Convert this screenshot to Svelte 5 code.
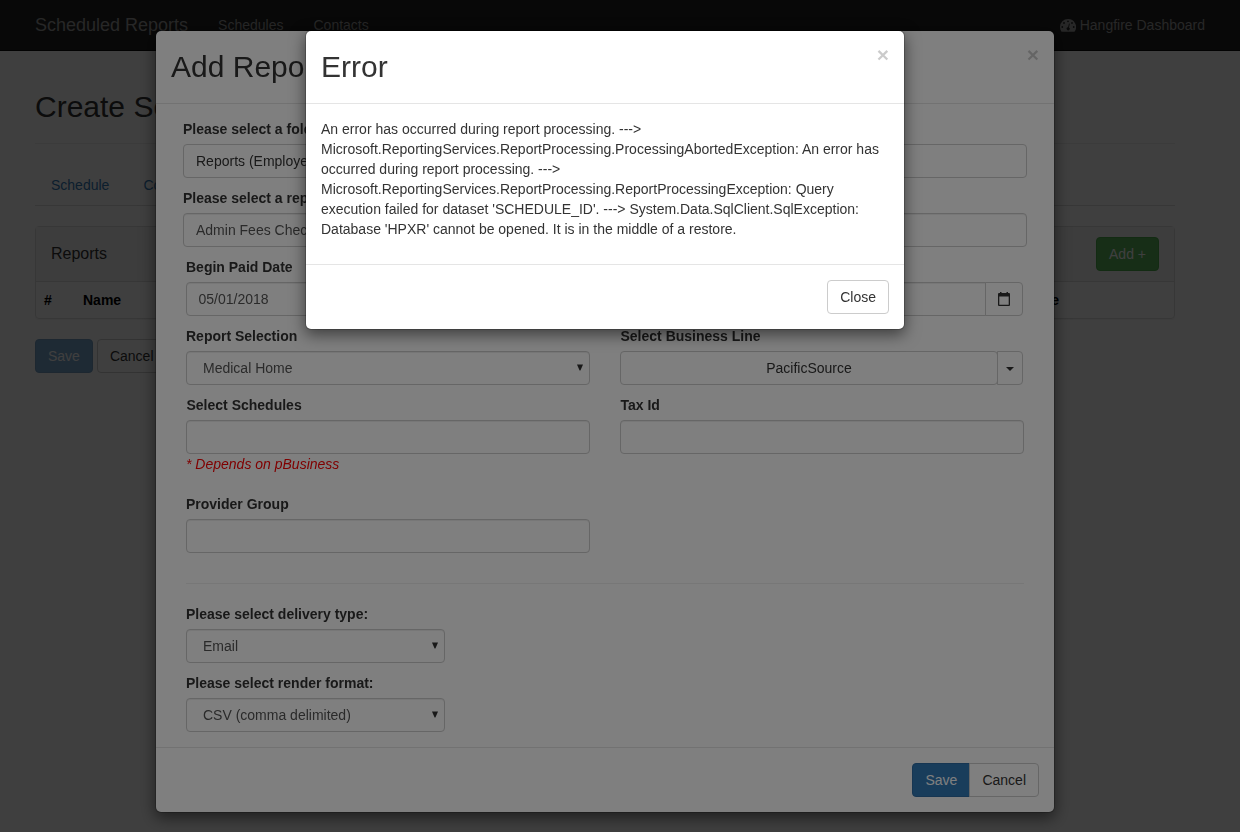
<script>
  const message = [
    'An error has occurred during report processing. --->',
    'Microsoft.ReportingServices.ReportProcessing.ProcessingAbortedException: An error has',
    'occurred during report processing. --->',
    'Microsoft.ReportingServices.ReportProcessing.ReportProcessingException: Query',
    "execution failed for dataset 'SCHEDULE_ID'. ---> System.Data.SqlClient.SqlException:",
    "Database 'HPXR' cannot be opened. It is in the middle of a restore."
  ];
</script>

{#snippet select(value)}
  <div class="control select">
    <span>{value}</span>
    <svg width="6" height="7" viewBox="0 0 6 7"><path d="M0 .5h6L3.400 6.500h-.8z" fill="#333" /></svg>
  </div>
{/snippet}

<div class="page">
  <nav class="navbar">
    <span class="brand">Scheduled Reports</span>
    <span class="navlink">Schedules</span>
    <span class="navlink">Contacts</span>
    <span class="navlink right">
      <svg width="16" height="13" viewBox="0 0 16 13">
        <path fill="#9d9d9d" fill-rule="evenodd" d="M8 0a8 8 0 0 0-8 8c0 1.600.4 3 1.200 4.300.2.400.4.500.8.500h12c.4 0 .6-.1.800-.5A8 8 0 0 0 8 0zM2.300 7.100a.9.9 0 1 1 0 1.800.9.9 0 0 1 0-1.800zM4 3.100a.9.9 0 1 1 0 1.800.9.9 0 0 1 0-1.800zM8 1.400a.9.9 0 1 1 0 1.800.9.9 0 0 1 0-1.800zM12 3.100a.9.9 0 1 1 0 1.800.9.9 0 0 1 0-1.800zM13.700 7.100a.9.9 0 1 1 0 1.800.9.9 0 0 1 0-1.800zM9 4.500l.8.200-.9 3.800a1.500 1.500 0 1 1-.8-.2z" />
      </svg>
      Hangfire Dashboard
    </span>
  </nav>
  <main class="content">
    <h2>Create Schedule</h2>
    <div class="tabs"><span>Schedule</span><span>Contacts</span></div>
    <section class="panel">
      <header>
        <span>Reports</span>
        <button class="btn success">Add +</button>
      </header>
      <div class="thead"><span class="c1">#</span><span class="c2">Name</span><span class="c3">Delivery Type</span></div>
    </section>
    <div class="actions">
      <button class="btn primary faded">Save</button>
      <button class="btn">Cancel</button>
    </div>
  </main>
</div>

<div class="backdrop"></div>

<div class="modal large">
  <header><h2>Add Report</h2><span class="close">×</span></header>
  <div class="body form">
    <div class="wide field">
      <span class="label">Please select a folder:</span>
      <div class="control dark">Reports (Employer)</div>
    </div>
    <div class="wide field">
      <span class="label">Please select a report:</span>
      <div class="control">Admin Fees Check</div>
    </div>
    <div class="grid">
      <div class="field">
        <span class="label">Begin Paid Date</span>
        <div class="group">
          <div class="control">05/01/2018</div>
          <div class="addon"></div>
        </div>
      </div>
      <div class="field">
        <span class="label">End Paid Date</span>
        <div class="group">
          <div class="control"></div>
          <div class="addon">
            <svg width="12" height="14" viewBox="0 0 12 14">
              <path fill="#333" fill-rule="evenodd" d="M2 0h1.500v1h5V0H10v1h1a1 1 0 0 1 1 1v11a1 1 0 0 1-1 1H1a1 1 0 0 1-1-1V2a1 1 0 0 1 1-1h1zM1.300 4.500v8.200h9.400V4.500z" />
            </svg>
          </div>
        </div>
      </div>
      <div class="field">
        <span class="label">Report Selection</span>
        {@render select('Medical Home')}
      </div>
      <div class="field">
        <span class="label in">Select Business Line</span>
        <div class="group">
          <button class="btn split">PacificSource</button>
          <button class="btn caret"><svg width="8" height="4" viewBox="0 0 8 4"><path d="M0 0h8L4 4z" fill="#333" /></svg></button>
        </div>
      </div>
      <div class="field">
        <span class="label in">Select Schedules</span>
        <div class="control"></div>
        <em>* Depends on pBusiness</em>
      </div>
      <div class="field">
        <span class="label in">Tax Id</span>
        <div class="control"></div>
      </div>
      <div class="field provider">
        <span class="label">Provider Group</span>
        <div class="control"></div>
      </div>
    </div>
    <hr />
    <div class="field short">
      <span class="label">Please select delivery type:</span>
      {@render select('Email')}
    </div>
    <div class="field short">
      <span class="label">Please select render format:</span>
      {@render select('CSV (comma delimited)')}
    </div>
  </div>
  <footer>
    <button class="btn primary first">Save</button><button class="btn last">Cancel</button>
  </footer>
</div>

<div class="backdrop"></div>

<div class="modal small">
  <header><h2>Error</h2><span class="close">×</span></header>
  <div class="body">
    {#each message as line}<div class="line">{line}</div>{/each}
  </div>
  <footer><button class="btn">Close</button></footer>
</div>

<style>
  :global(body) {
    margin: 0;
    overflow: hidden;
    background: #fff;
    color: #333;
    font: 14px/20px 'Liberation Sans', Arial, sans-serif;
  }
  :global(#app *) { box-sizing: border-box; }
  h2 { margin: 0; font-size: 30px; font-weight: 400; }
  .page { height: 832px; }
  .navbar {
    display: flex;
    align-items: center;
    height: 51px;
    padding: 0 35px;
    background: #222;
    border-bottom: 1px solid #080808;
    color: #9d9d9d;
  }
  .brand { font-size: 18px; margin-right: 15px; }
  .navlink { padding: 0 15px; }
  .right { display: flex; align-items: center; gap: 4px; margin-left: auto; padding: 0; }
  .content { width: 1140px; margin-left: 35px; padding-top: 39px; }
  .content h2 { height: 54px; line-height: 33px; border-bottom: 1px solid #eee; }
  .tabs { display: flex; gap: 2px; margin-top: 20px; height: 42px; border-bottom: 1px solid #ddd; color: #337ab7; }
  .tabs span { padding: 11px 16px; }
  .panel { margin-top: 20px; height: 93px; border: 1px solid #ddd; border-radius: 4px; box-shadow: 0 1px 1px rgba(0, 0, 0, 0.05); }
  .panel header {
    display: flex;
    align-items: center;
    justify-content: space-between;
    height: 55px;
    padding: 0 15px;
    background: #f5f5f5;
    border-bottom: 1px solid #ddd;
    font-size: 16px;
  }
  .thead { display: flex; padding: 8px; font-weight: 700; color: #000; }
  .c1 { width: 39px; }
  .c2 { width: 841px; }
  .c3 { width: 135px; text-align: right; white-space: nowrap; }
  .actions { display: flex; gap: 4px; margin-top: 20px; }
  .btn {
    height: 34px;
    padding: 6px 12px;
    border: 1px solid #ccc;
    border-radius: 4px;
    background: #fff;
    color: #333;
    font: inherit;
    font-size: 14px;
    line-height: 20px;
  }
  .success { background: #5cb85c; border-color: #4cae4c; color: #fff; }
  .primary { background: #337ab7; border-color: #2e6da4; color: #fff; }
  .faded { opacity: 0.65; }
  .backdrop { position: fixed; inset: 0; background: rgba(0, 0, 0, 0.5); }
  .modal {
    position: absolute;
    top: 30px;
    background: #fff;
    background-clip: padding-box;
    border: 1px solid rgba(0, 0, 0, 0.2);
    border-radius: 6px;
    box-shadow: 0 5px 15px rgba(0, 0, 0, 0.5);
  }
  .large { left: 155px; width: 900px; }
  .small { left: 305px; width: 600px; }
  .modal header {
    display: flex;
    justify-content: space-between;
    height: 73px;
    padding: 15px;
    border-bottom: 1px solid #e5e5e5;
  }
  .modal header h2 { line-height: 41px; }
  .close { margin-top: -2px; font-size: 21px; font-weight: 700; line-height: 21px; color: #000; opacity: 0.2; text-shadow: 0 1px 0 #fff; }
  .body { padding: 15px; }
  .small .body { padding-bottom: 25px; }
  .line { white-space: nowrap; }
  .modal footer { display: flex; justify-content: flex-end; padding: 15px; border-top: 1px solid #e5e5e5; }
  .form { padding: 15px 30px 15px; }
  .wide { margin: 0 -3px; }
  .field { padding-bottom: 10px; }
  .label { display: block; margin-bottom: 5px; font-weight: 700; }
  .in { padding-left: 0.5px; }
  .control {
    height: 34px;
    padding: 6px 12px;
    border: 1px solid #ccc;
    border-radius: 4px;
    box-shadow: inset 0 1px 1px rgba(0, 0, 0, 0.075);
    color: #555;
  }
  .dark { color: #333; box-shadow: none; }
  .select { display: flex; align-items: center; justify-content: space-between; padding: 6px 6px 6px 16px; }
  .select svg { margin-top: -1px; }
  .grid { display: grid; grid-template-columns: 404px 404px; column-gap: 30px; }
  .group { display: flex; width: 403px; }
  .group .control { flex: 1; border-radius: 4px 0 0 4px; padding-left: 11.5px; }
  .addon {
    display: flex;
    align-items: center;
    justify-content: center;
    width: 38px;
    margin-left: -1px;
    border: 1px solid #ccc;
    border-radius: 0 4px 4px 0;
  }
  .split { flex: 1; }
  .caret { display: flex; align-items: center; width: 26px; margin-left: -1px; padding: 2px 8px 0; border-radius: 0 4px 4px 0; }
  em { display: block; color: #f00; }
  .provider { padding-top: 10px; }
  hr { height: 1px; margin: 20px 0; border: 0; background: #eee; }
  .short { width: 259px; }
  .short:last-child { padding-bottom: 0; }
  .first { border-radius: 4px 0 0 4px; }
  .last { margin-left: -1px; border-radius: 0 4px 4px 0; }
</style>
